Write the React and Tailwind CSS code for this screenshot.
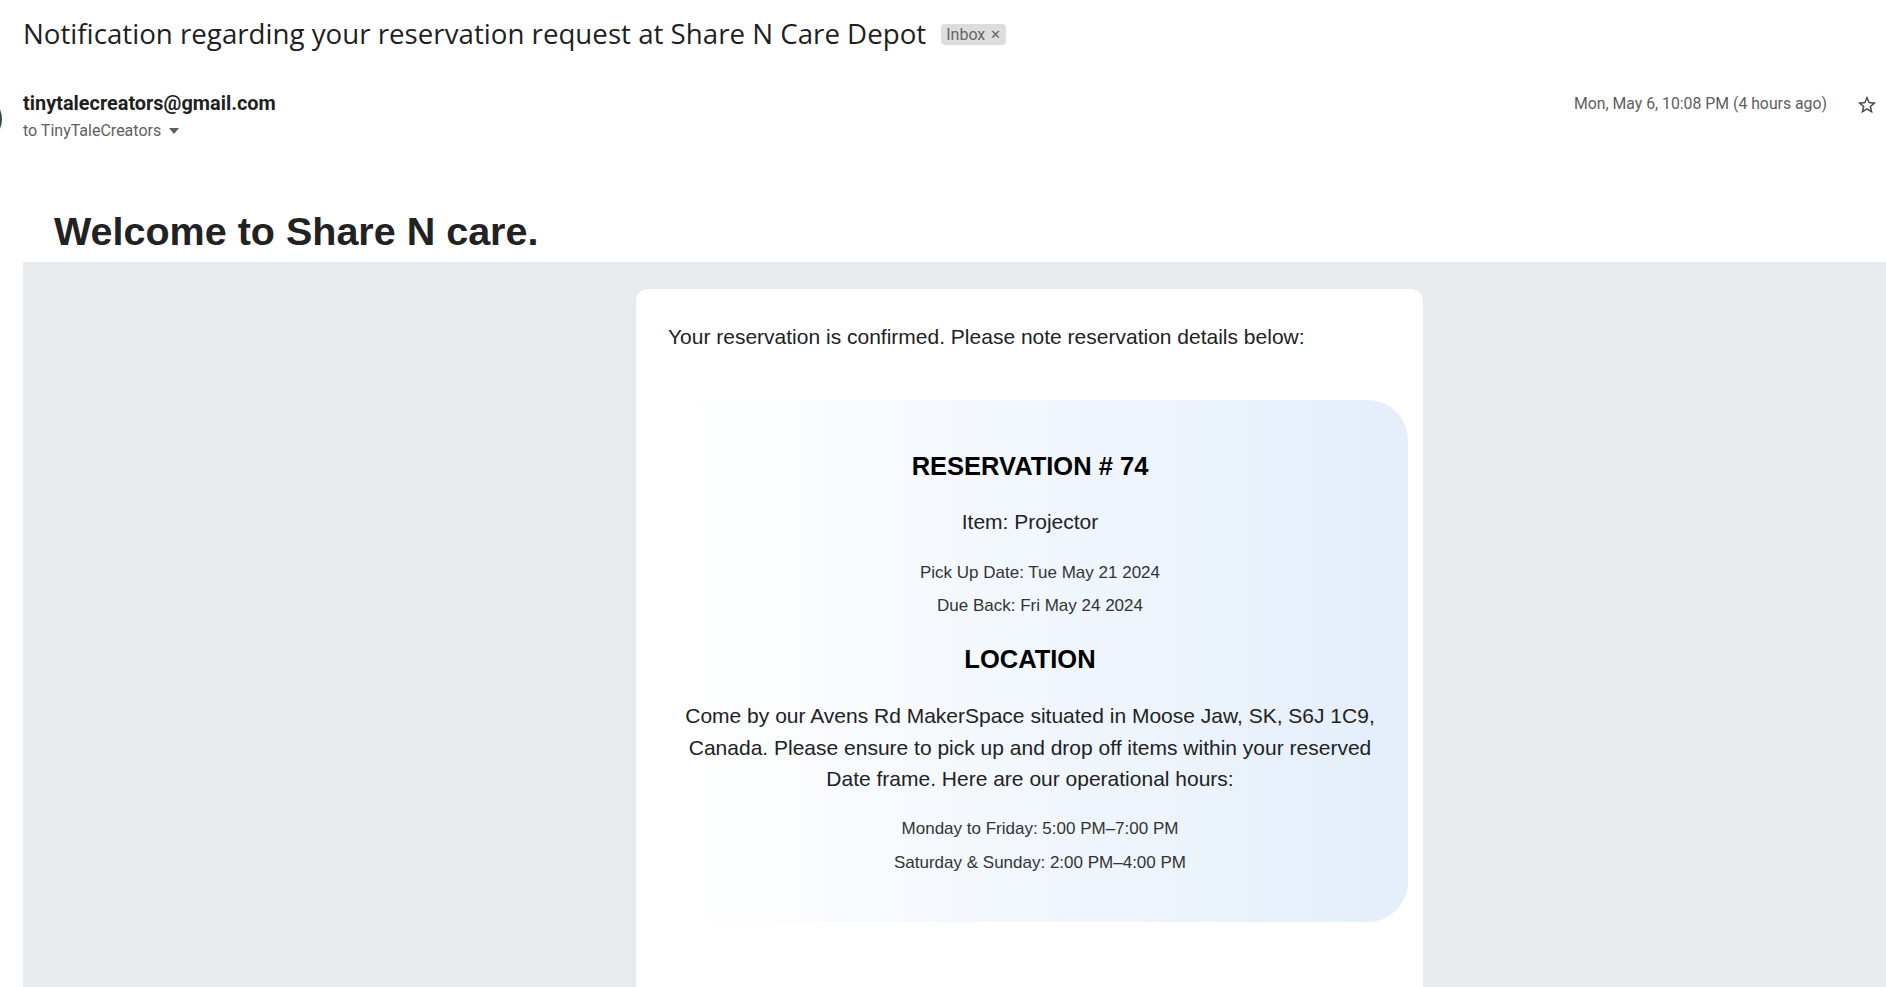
import React from "react";

const StarOutline = () => (
  <svg width="22" height="22" viewBox="0 0 24 24" fill="#444746">
    <path d="M22 9.24l-7.19-.62L12 2 9.19 8.63 2 9.24l5.46 4.73L5.82 21 12 17.27 18.18 21l-1.63-7.03L22 9.24zM12 15.4l-3.76 2.27 1-4.28-3.32-2.88 4.38-.38L12 6.1l1.71 4.04 4.38.38-3.32 2.88 1 4.28L12 15.4z" />
  </svg>
);

const App = () => {
  return (
    <div className="w-full h-[987px] overflow-hidden bg-white flex flex-col font-['Roboto',sans-serif]">
      {/* Subject */}
      <div className="flex items-center pl-[23px] pt-[15px] h-[52px]">
        <h1 className="text-[27.7px] leading-[36px] text-[#1f1f1f] font-['Open_Sans',sans-serif]">
          Notification regarding your reservation request at Share N Care Depot
        </h1>
        <span className="ml-[15px] mt-[2px] flex items-center gap-[5px] bg-[#dddddd] text-[#666666] text-[16px] leading-[21px] px-[5px] rounded-[4px]">
          Inbox <span className="text-[13px]">✕</span>
        </span>
      </div>

      {/* Sender row */}
      <div className="flex pt-[42px] h-[150px]">
        <div className="w-[50px] h-[50px] rounded-full bg-[#37474f] -ml-[48px] mr-[21px] mt-[1px] shrink-0" />
        <div className="flex flex-col">
          <div className="text-[19.9px] leading-[22px] font-bold text-[#1f1f1f]">
            tinytalecreators@gmail.com
          </div>
          <div className="mt-[6px] flex items-center text-[16px] leading-[20px] text-[#5e5e5e]">
            to TinyTaleCreators
            <svg className="ml-[8px]" width="10" height="6" viewBox="0 0 10 6" fill="#5e5e5e">
              <path d="M0 0h10L5 6z" />
            </svg>
          </div>
        </div>
        <div className="ml-auto flex items-start">
          <span className="text-[15.8px] leading-[22px] text-[#5e5e5e]">
            Mon, May 6, 10:08 PM (4 hours ago)
          </span>
          <span className="ml-[29px] mr-[8px] mt-[1px]">
            <StarOutline />
          </span>
        </div>
      </div>

      {/* Email body */}
      <div className="flex flex-col flex-1 pl-[23px] font-['Liberation_Sans',Arial,sans-serif]">
        <h2 className="pl-[31px] pt-[64px] h-[118px] text-[39.5px] leading-[46px] font-bold text-[#222222]">
          Welcome to Share N care.
        </h2>
        <div className="flex-1 bg-[#e8ebee] overflow-hidden">
          <div className="ml-[613px] mt-[27px] w-[787px] h-[800px] bg-white rounded-t-[12px] flex flex-col">
            <p className="pl-[32px] pt-[36px] text-[21px] leading-[24px] text-[#222222]">
              Your reservation is confirmed. Please note reservation details below:
            </p>
            <div className="ml-[36px] mt-[51px] w-[736px] rounded-[40px] bg-gradient-to-r from-[#ffffff] to-[#e3eefa] pl-[8px] pr-[28px] pt-[51px] pb-[49px] flex flex-col items-center text-center">
              <h3 className="text-[25.5px] leading-[30px] font-bold text-black">RESERVATION # 74</h3>
              <p className="mt-[29px] text-[21px] leading-[24px] text-[#222222]">Item: Projector</p>
              <p className="mt-[29px] pl-[20px] text-[17px] leading-[20px] text-[#333333]">
                Pick Up Date: Tue May 21 2024
              </p>
              <p className="mt-[13px] pl-[20px] text-[17px] leading-[20px] text-[#333333]">
                Due Back: Fri May 24 2024
              </p>
              <h3 className="mt-[28px] text-[25.5px] leading-[30px] font-bold text-black">LOCATION</h3>
              <p className="mt-[26px] text-[21px] leading-[31.5px] text-[#222222]">
                Come by our Avens Rd MakerSpace situated in Moose Jaw, SK, S6J 1C9, Canada. Please ensure to pick up and drop off items within your reserved Date frame. Here are our operational hours:
              </p>
              <p className="mt-[24px] pl-[20px] text-[17px] leading-[20px] text-[#333333]">
                Monday to Friday: 5:00 PM–7:00 PM
              </p>
              <p className="mt-[14px] pl-[20px] text-[17px] leading-[20px] text-[#333333]">
                Saturday &amp; Sunday: 2:00 PM–4:00 PM
              </p>
            </div>
          </div>
        </div>
      </div>
      <div className="h-[6px] bg-[#f6f8fc] shrink-0" />
    </div>
  );
};

export default App;
